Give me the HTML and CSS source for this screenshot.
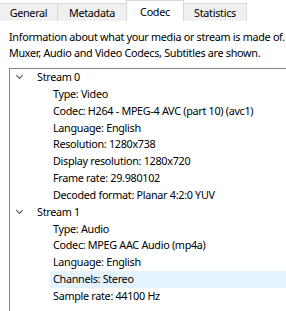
FILE: index.html
```
<!DOCTYPE html>
<html lang="en">
<head>
    <meta charset="UTF-8">
    <title>Codec</title>
    <link rel="stylesheet" href="styles.css">
</head>
<body>
    <div class="tabs">
        <div class="tab tab-general">General</div>
        <div class="tab tab-metadata">Metadata</div>
        <div class="tab tab-codec active">Codec</div>
        <div class="tab tab-stats">Statistics</div>
    </div>

    <p class="info">Information about what your media or stream is made of.<br>Muxer, Audio and Video Codecs, Subtitles are shown.</p>

    <div class="tree">
        <div class="row parent"><span class="chevron"></span>Stream 0</div>
        <div class="row child">Type: Video</div>
        <div class="row child">Codec: H264 - MPEG-4 AVC (part 10) (avc1)</div>
        <div class="row child">Language: English</div>
        <div class="row child">Resolution: 1280x738</div>
        <div class="row child">Display resolution: 1280x720</div>
        <div class="row child">Frame rate: 29.980102</div>
        <div class="row child">Decoded format: Planar 4:2:0 YUV</div>
        <div class="row parent"><span class="chevron"></span>Stream 1</div>
        <div class="row child">Type: Audio</div>
        <div class="row child">Codec: MPEG AAC Audio (mp4a)</div>
        <div class="row child">Language: English</div>
        <div class="row child hover">Channels: Stereo</div>
        <div class="row child">Sample rate: 44100 Hz</div>
    </div>
</body>
</html>
```
FILE: styles.css
```
body {
    margin: 0;
    background-color: white;
    color: black;
    font-family: 'Noto Sans', sans-serif;
    font-size: 10.8px;
    letter-spacing: -0.3px;
    overflow: hidden;
    height: 311px;
}
.tabs {
    display: flex;
    align-items: flex-end;
    height: 21px;
}
.tab {
    box-sizing: border-box;
    height: 18px;
    text-align: center;
    line-height: 18px;
    background-color: #f0f0f0;
    border: 1px solid #d9d9d9;
    border-bottom: none;
    margin-left: -1px;
}
.tab-general {
    width: 58px;
    margin-left: 0;
    border-left: none;
}
.tab-metadata {
    width: 70px;
}
.tab-codec {
    width: 58px;
}
.tab-stats {
    width: 64px;
}
.tab.active {
    height: 21px;
    line-height: 22px;
    background-color: white;
}
.info {
    margin: 8px 0 0 9px;
    line-height: 16px;
    white-space: nowrap;
}
.tree {
    margin: 7px 0 0 9px;
    border-top: 1px solid #828790;
    border-left: 1px solid #828790;
    height: 250px;
}
.row {
    height: 16.85px;
    line-height: 16px;
    white-space: nowrap;
}
.parent {
    display: flex;
    align-items: center;
    padding-left: 5px;
}
.chevron {
    width: 4px;
    height: 4px;
    border-right: 1.5px solid #4d5359;
    border-bottom: 1.5px solid #4d5359;
    transform: rotate(45deg);
    margin: -4px 15px 0 2px;
}
.child {
    margin-left: 40px;
    padding-left: 3px;
}
.hover {
    background-color: #e5f3ff;
}
```
